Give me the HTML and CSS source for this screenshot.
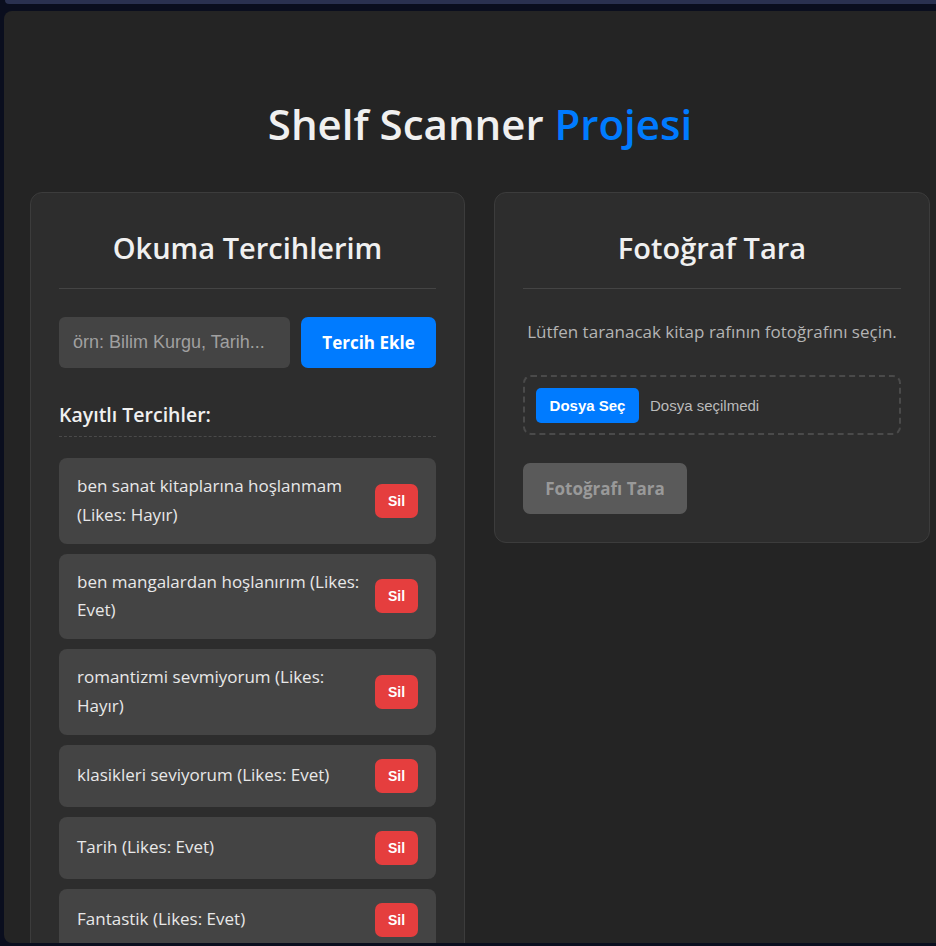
FILE: index.html
```html
<!DOCTYPE html>
<html lang="tr">
<head>
<meta charset="utf-8">
<title>Shelf Scanner Projesi</title>
<link rel="stylesheet" href="styles.css">
</head>
<body>
<div class="topbar"></div>
<main class="app">
  <h1 class="app-title">Shelf Scanner <span class="accent">Projesi</span></h1>
  <div class="columns">
    <section class="panel">
      <h2 class="panel-title">Okuma Tercihlerim</h2>
      <div class="add-row">
        <input class="pref-input" type="text" placeholder="örn: Bilim Kurgu, Tarih...">
        <button class="btn btn-primary btn-add">Tercih Ekle</button>
      </div>
      <h3 class="sub-title">Kayıtlı Tercihler:</h3>
      <ul class="pref-list">
        <li class="pref-item"><span class="pref-text">ben sanat kitaplarına hoşlanmam (Likes: Hayır)</span><button class="btn-del">Sil</button></li>
        <li class="pref-item"><span class="pref-text">ben mangalardan hoşlanırım (Likes: Evet)</span><button class="btn-del">Sil</button></li>
        <li class="pref-item"><span class="pref-text">romantizmi sevmiyorum (Likes: Hayır)</span><button class="btn-del">Sil</button></li>
        <li class="pref-item"><span class="pref-text">klasikleri seviyorum (Likes: Evet)</span><button class="btn-del">Sil</button></li>
        <li class="pref-item"><span class="pref-text">Tarih (Likes: Evet)</span><button class="btn-del">Sil</button></li>
        <li class="pref-item"><span class="pref-text">Fantastik (Likes: Evet)</span><button class="btn-del">Sil</button></li>
      </ul>
    </section>
    <section class="panel panel-scan">
      <h2 class="panel-title">Fotoğraf Tara</h2>
      <p class="scan-hint">Lütfen taranacak kitap rafının fotoğrafını seçin.</p>
      <div class="file-box">
        <span class="file-btn">Dosya Seç</span>
        <span class="file-name">Dosya seçilmedi</span>
      </div>
      <div class="scan-actions">
        <button class="btn btn-disabled" disabled>Fotoğrafı Tara</button>
      </div>
    </section>
  </div>
</main>
</body>
</html>
```

FILE: styles.css
```css
html, body {
  margin: 0;
  padding: 0;
}
body {
  background: #0a0e1e;
  width: 936px;
  height: 946px;
  overflow: hidden;
  font-family: "Open Sans", "Noto Sans", sans-serif;
  color: #f0f0f0;
}
.topbar {
  height: 4px;
  margin-left: 5px;
  background: #2a3150;
  border-bottom-left-radius: 6px;
}
.app {
  box-sizing: border-box;
  margin: 7px 0 0 4px;
  width: 952px;
  height: 932px;
  overflow: hidden;
  background: #242424;
  border-radius: 8px;
  padding: 85px 26px 0;
}
.app-title {
  margin: 0 0 40px;
  font-size: 42px;
  line-height: 56px;
  font-weight: 600;
  text-align: center;
  color: #f0f0f0;
}
.accent {
  color: #007bff;
}
.columns {
  display: grid;
  grid-template-columns: 435px 436px;
  column-gap: 29px;
  align-items: start;
}
.panel {
  background: #2d2d2d;
  border: 1px solid #3c3c3c;
  border-radius: 12px;
  padding: 28px;
}
.panel-title {
  margin: 7px 0 0;
  padding-bottom: 20px;
  border-bottom: 1px solid #444;
  font-size: 29px;
  line-height: 40px;
  font-weight: 600;
  text-align: center;
  color: #f0f0f0;
}
.add-row {
  display: flex;
  gap: 11px;
  margin-top: 28px;
}
.pref-input {
  flex: 1;
  min-width: 0;
  height: 51px;
  box-sizing: border-box;
  border: none;
  border-radius: 6px;
  background: #444;
  padding: 0 14px;
  font-family: "Liberation Sans", Arial, sans-serif;
  font-size: 18px;
  color: #eee;
  outline: none;
}
.pref-input::placeholder {
  color: #a0a0a0;
}
.btn {
  border: none;
  border-radius: 7px;
  font-family: "Open Sans", "Noto Sans", sans-serif;
  font-weight: 700;
  font-size: 17px;
  height: 51px;
  padding: 0 22px;
  cursor: pointer;
}
.btn-primary {
  background: #007bff;
  color: #fff;
}
.btn-add {
  width: 135px;
  padding: 0;
}
.sub-title {
  margin: 33px 0 0;
  padding-bottom: 7px;
  border-bottom: 1px dashed #4a4a4a;
  font-size: 19.5px;
  line-height: 28px;
  font-weight: 600;
  color: #f0f0f0;
}
.pref-list {
  list-style: none;
  margin: 21px 0 0;
  padding: 0;
  display: flex;
  flex-direction: column;
  gap: 10px;
}
.pref-item {
  display: flex;
  align-items: center;
  gap: 15px;
  background: #444;
  border-radius: 8px;
  padding: 14px 18px;
}
.pref-text {
  flex: 1;
  font-size: 17px;
  line-height: 28.75px;
  color: #e8e8e8;
}
.btn-del {
  flex: none;
  width: 43px;
  height: 34px;
  border: none;
  border-radius: 7px;
  background: #e53e3e;
  color: #fff;
  font-family: "Liberation Sans", Arial, sans-serif;
  font-weight: 700;
  font-size: 14px;
  padding: 0;
}
.scan-hint {
  margin: 29px 0 0;
  text-align: center;
  font-size: 17px;
  line-height: 28px;
  color: #b4b4b4;
}
.file-box {
  margin-top: 29px;
  display: flex;
  align-items: center;
  gap: 11px;
  height: 60px;
  box-sizing: border-box;
  padding: 0 11px;
  border: 2px dashed #4a4a4a;
  border-radius: 8px;
}
.file-btn {
  display: inline-flex;
  align-items: center;
  justify-content: center;
  width: 103px;
  height: 35px;
  border-radius: 5px;
  background: #007bff;
  color: #fff;
  font-family: "Liberation Sans", Arial, sans-serif;
  font-weight: 700;
  font-size: 15px;
}
.file-name {
  font-family: "Liberation Sans", Arial, sans-serif;
  font-size: 15px;
  color: #bbb;
}
.scan-actions {
  margin-top: 28px;
  display: flex;
}
.btn-disabled {
  width: 164px;
  padding: 0;
  background: #5a5a5a;
  color: #999;
  cursor: not-allowed;
}
```
